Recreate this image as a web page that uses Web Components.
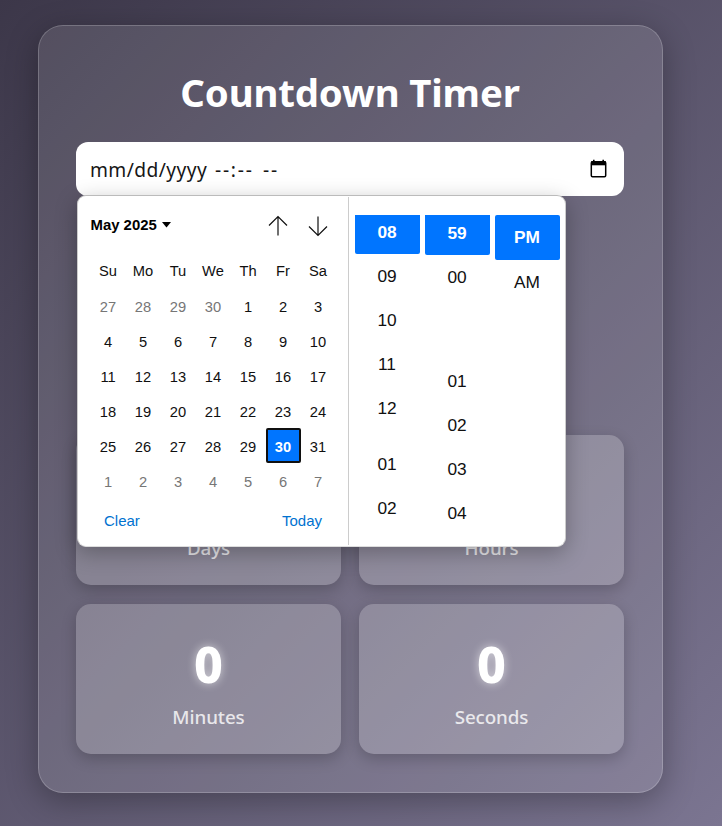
<!DOCTYPE html>
<html lang="en">
<head>
<meta charset="utf-8">
<title>Countdown Timer</title>
<style>
html, body { margin: 0; height: 100%; }
body { overflow: hidden; }
</style>
</head>
<body>
<countdown-app></countdown-app>
<script>
const define = (name, html, render) => {
  customElements.define(name, class extends HTMLElement {
    constructor() {
      super();
      const t = document.createElement('template');
      t.innerHTML = html;
      this.attachShadow({ mode: 'open' }).append(t.content.cloneNode(true));
    }
    connectedCallback() { if (render && !this.done) { this.done = true; render(this, this.shadowRoot); } }
  });
};

define('unit-card', `
<style>
:host { display: flex; flex-direction: column; align-items: center; box-sizing: border-box; height: 150px; padding-top: 25px;
  border-radius: 15px; background: rgba(255,255,255,.2); box-shadow: 0 5px 15px rgba(0,0,0,.2); color: #fff; }
.n { font-size: 50px; font-weight: 800; line-height: 70px; height: 70px; text-shadow: 0 0 10px rgba(255,255,255,.6); }
.l { font-size: 18.8px; line-height: 26px; margin-top: 5px; opacity: .8; font-weight: 500; letter-spacing: -.1px; }
</style>
<div class="n"><slot></slot></div><div class="l"><slot name="label"></slot></div>`);

define('date-field', `
<style>
:host { display: flex; align-items: center; justify-content: space-between; box-sizing: border-box; height: 54px; padding: 0 16px 0 14px;
  background: #fff; border-radius: 12px; color: #161616; font-size: 19.2px; }
.t { display: flex; }
.d { letter-spacing: .42px; width: 125px; }
.h { letter-spacing: 1.75px; width: 48px; }
.m { letter-spacing: 1.75px; }
svg { display: block; margin-bottom: 1px; }
</style>
<span class="t"><span class="d">mm/dd/yyyy</span><span class="h">--:--</span><span class="m">--</span></span>
<svg width="18" height="20" viewBox="0 0 18 20"><path d="M3.8 .8v3M13.2 .8v3" stroke="#000" stroke-width="1.6"/><rect x="1.3" y="2.8" width="14.4" height="15" rx="1.2" fill="none" stroke="#000" stroke-width="1.5"/><path d="M1 2.3h15v4H1z"/></svg>`);

define('month-calendar', `
<style>
:host { display: block; box-sizing: border-box; width: 270px; padding: 12px 12px 0 13px; font: 14.7px "Liberation Sans", Arial, sans-serif; color: #101010; }
.head { display: flex; align-items: center; height: 34px; margin-left: -.5px; }
.head b { font-size: 14.9px; color: #000; }
.tri { margin-left: 5px; }
.up { margin-left: auto; margin-right: 20px; }
.head .arrow { flex: none; position: relative; top: 1px; }
.down { margin-right: 8px; }
.grid { display: grid; grid-template-columns: repeat(7, 35px); grid-auto-rows: 35px; margin-top: 11px; }
.grid span { display: flex; align-items: center; justify-content: center; box-sizing: border-box; padding: 2px 1px 0 0; }
.grid span:nth-child(-n+7) { padding-top: 0; }
.out { color: #767676; }
.grid .sel { background: #0075ff; color: #fff; font-weight: 700; border: 2px solid #101010; border-radius: 2px; }
.foot { display: flex; justify-content: space-between; padding: 14px 14px 0 13px; color: #0072d0; font-size: 15px; }
</style>
<div class="head"><b>May 2025</b><svg class="tri" width="9" height="6"><path d="M0 0h9L4.5 5.5z"/></svg>
<svg class="arrow up" width="20" height="22" viewBox="0 0 20 22" fill="none" stroke="#101010" stroke-width="1.2"><path d="M10 20.5V1.5M1 10.5l9-9 9 9"/></svg>
<svg class="arrow down" width="20" height="22" viewBox="0 0 20 22" fill="none" stroke="#101010" stroke-width="1.2"><path d="M10 1.5v19M1 11.5l9 9 9-9"/></svg></div>
<div class="grid"></div>
<div class="foot"><span>Clear</span><span>Today</span></div>`, (el, root) => {
  const grid = root.querySelector('.grid');
  const add = (t, c) => { const s = document.createElement('span'); s.textContent = t; if (c) s.className = c; grid.append(s); };
  ['Su', 'Mo', 'Tu', 'We', 'Th', 'Fr', 'Sa'].forEach(d => add(d));
  for (let d = 27; d <= 30; d++) add(d, 'out');
  for (let d = 1; d <= 31; d++) add(d, d === 30 ? 'sel' : '');
  for (let d = 1; d <= 7; d++) add(d, 'out');
});

define('time-column', `
<style>
:host { display: block; width: 65px; height: 325px; overflow: hidden; font: 17.3px "Liberation Sans", Arial, sans-serif; color: #101010; }
.list { margin-top: calc(var(--shift, 0) * -1px); }
.list div { display: flex; align-items: center; justify-content: center; height: 44px; box-sizing: border-box; padding-right: 1px; }
.list div:first-child { background: #0075ff; color: #fff; font-weight: 700; border-radius: 2px; height: var(--first, 44px); }
</style>
<div class="list"></div>`, (el, root) => {
  const list = root.querySelector('.list');
  el.getAttribute('items').split(',').forEach((t, i) => {
    const d = document.createElement('div');
    d.textContent = t;
    if (i === +el.getAttribute('wrap')) d.style.marginTop = el.getAttribute('gap') + 'px';
    list.append(d);
  });
});

define('picker-popup', `
<style>
:host { display: flex; box-sizing: border-box; width: 489px; height: 352px; background: #fff; border: 1px solid; border-color: #bbb #ccc #ddd; border-radius: 9px;
  overflow: hidden; box-shadow: 0 6px 22px rgba(0,0,0,.28); }
.times { display: flex; gap: 5px; border-left: 1px solid #ccc; padding: 18px 0 0 6px; margin: 1px 0; box-sizing: border-box; flex: 1; }
time-column { flex: none; }
</style>
<month-calendar></month-calendar>
<div class="times">
<time-column items="08,09,10,11,12,01,02" wrap="5" gap="12" style="--shift:5"></time-column>
<time-column items="59,00,01,02,03,04" wrap="2" gap="60" style="--shift:4"></time-column>
<time-column items="PM,AM" style="--first:45px"></time-column>
</div>`);

define('countdown-app', `
<style>
:host { display: block; box-sizing: border-box; width: 722px; height: 826px; padding: 25px 0 0 38px;
  background: linear-gradient(135deg, #3c3749, #7b7591); font-family: "Noto Sans", "Open Sans", sans-serif; }
.card { position: relative; box-sizing: border-box; width: 625px; height: 768px; padding: 36px 38px 38px 37px; border: 1px solid rgba(255,255,255,.2);
  border-radius: 25px; background: rgba(255,255,255,.11); box-shadow: 0 8px 32px rgba(0,0,0,.3); display: flex; flex-direction: column; }
h1 { margin: 0; height: 80px; line-height: 60px; text-align: center; color: #fff; font-size: 38.4px; letter-spacing: -.15px; font-weight: 700; white-space: nowrap; }
date-field { width: 548px; }
.units { margin-top: auto; display: grid; grid-template-columns: 265px 265px; gap: 19px 18px; }
picker-popup { position: absolute; left: 38px; top: 169px; }
</style>
<div class="card">
<h1>Countdown Timer</h1>
<date-field></date-field>
<div class="units">
<unit-card><span slot="label">Days</span></unit-card>
<unit-card><span slot="label">Hours</span></unit-card>
<unit-card>0<span slot="label">Minutes</span></unit-card>
<unit-card>0<span slot="label">Seconds</span></unit-card>
</div>
<picker-popup></picker-popup>
</div>`);
</script>
</body>
</html>
